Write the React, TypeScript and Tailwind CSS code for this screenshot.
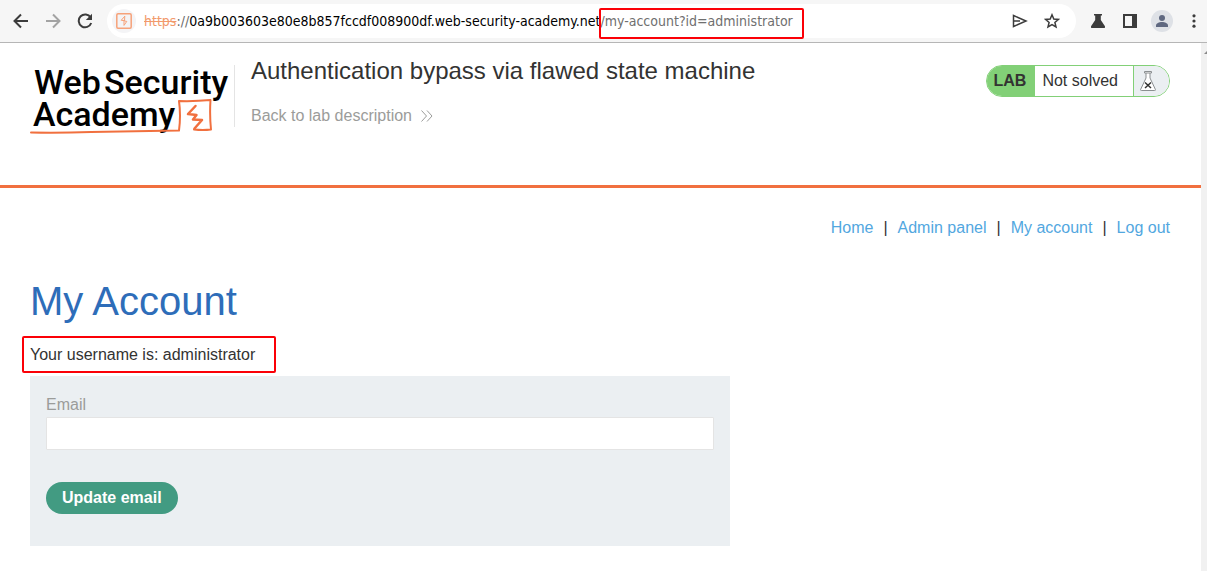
import type { ReactNode } from "react";

function IconButton({ label, className = "w-8", children }: { label: string; className?: string; children: ReactNode }) {
  return (
    <button type="button" aria-label={label} className={`flex h-8 shrink-0 items-center justify-center ${className}`}>
      {children}
    </button>
  );
}

function BrowserBar() {
  return (
    <div className="flex h-[43px] items-center border-b border-[#b6b6b6] bg-[#f6f6f6] pl-[5px] font-['DejaVu_Sans_Condensed','Noto_Sans',sans-serif] text-[#3c3c3c]">
      <IconButton label="Back">
        <svg width="16" height="16" viewBox="0 0 16 16" fill="none" stroke="currentColor" strokeWidth="2">
          <path d="M15 8H2.5M8 1.5 1.5 8 8 14.5" />
        </svg>
      </IconButton>
      <IconButton label="Forward" className="w-8 text-[#a3a3a3]">
        <svg width="16" height="16" viewBox="0 0 16 16" fill="none" stroke="currentColor" strokeWidth="2">
          <path d="M1 8h12.500M8 1.500 14.500 8 8 14.500" />
        </svg>
      </IconButton>
      <IconButton label="Reload">
        <svg width="16" height="16" viewBox="0 0 16 16">
          <path d="M13.600 4.500A6.400 6.400 0 1 0 14.200 10" fill="none" stroke="currentColor" strokeWidth="2" />
          <path d="M15 .8v6.200H8.800z" fill="currentColor" />
        </svg>
      </IconButton>
      <div className="ml-1.5 flex h-[34px] min-w-0 grow items-center rounded-full bg-white pl-[5px] pr-2">
        <span className="flex h-6 w-6 shrink-0 items-center justify-center rounded-full bg-[#f4f4f6]">
          <svg width="16" height="16" viewBox="0 0 16 16" fill="none" stroke="#f6a27a">
            <rect x=".8" y=".8" width="14.400" height="14.400" rx="1.200" strokeWidth="1.500" />
            <path d="M8.800 3.200 5.200 7.300 8 7.600v4.800l2.800-4L8.500 8z" strokeWidth="1" />
          </svg>
        </span>
        <div className="ml-2 flex grow items-center whitespace-nowrap text-[14px] leading-5 text-black">
          <span className="text-[#f29a6c] line-through">https</span>
          <span className="text-[#6b6b6b]">://</span>
          <span>0a9b003603e80e8b857fccdf008900df.web-security-academy.net</span>
          <span className="relative text-[#6f6f6f]">
            /my-account?id=administrator
            <span className="pointer-events-none absolute -bottom-2 -left-px -right-[11px] -top-[3px] rounded-[2px] border-2 border-[#fb0007]" />
          </span>
        </div>
        <IconButton label="Share">
          <svg width="16" height="14" viewBox="0 0 16 14" fill="none" stroke="currentColor" strokeWidth="1.500">
            <path d="M1.500 1.500 14 7 1.500 12.500zM2 7h6" />
          </svg>
        </IconButton>
        <IconButton label="Bookmark">
          <svg width="16" height="16" viewBox="0 0 16 16" fill="none" stroke="currentColor" strokeWidth="1.500">
            <path d="m8 1.800 1.800 4.200 4.600.4-3.500 3 1.100 4.500-4-2.400-4 2.400 1.100-4.500-3.500-3L6.200 6z" />
          </svg>
        </IconButton>
      </div>
      <IconButton label="Labs extension" className="ml-1.5 w-8">
        <svg width="14" height="14" viewBox="0 0 14 14" fill="currentColor">
          <path d="M3 0h8v1.500H9.800V6l4 6c.7 1.200.1 2-1 2H1.200c-1.100 0-1.700-.8-1-2l4-6V1.500H3z" />
        </svg>
      </IconButton>
      <IconButton label="Side panel">
        <svg width="14" height="14" viewBox="0 0 14 14" fill="currentColor" fillRule="evenodd">
          <path d="M0 0h14v14H0zM2 2v10h7V2z" />
        </svg>
      </IconButton>
      <IconButton label="Profile">
        <svg width="22" height="22" viewBox="0 0 22 22">
          <circle cx="11" cy="11" r="11" fill="#dee1e6" />
          <circle cx="11" cy="8" r="3" fill="#5f6880" />
          <path d="M5 17v-1.500c0-2 3-3.500 6-3.500s6 1.500 6 3.500V17z" fill="#5f6880" />
        </svg>
      </IconButton>
      <IconButton label="Menu" className="ml-[3px] w-[26px]">
        <svg width="4" height="14" viewBox="0 0 4 14" fill="currentColor">
          <circle cx="2" cy="1.800" r="1.600" />
          <circle cx="2" cy="7" r="1.600" />
          <circle cx="2" cy="12.200" r="1.600" />
        </svg>
      </IconButton>
    </div>
  );
}

function Logo() {
  return (
    <svg width="202" height="76" viewBox="0 0 202 76" role="img" aria-label="Web Security Academy">
      <text fill="#000" fontFamily="Roboto, sans-serif" fontWeight="500" fontSize="34">
        <tspan x="4" y="33">Web</tspan>
        <tspan x="74" y="33">Security</tspan>
        <tspan x="3" y="65">Academy</tspan>
      </text>
      <g fill="none" stroke="#f1703f" strokeLinecap="round" strokeLinejoin="round">
        <path d="M1 71.500q30 .5 60-.5l88-1.500q2-15 0-29.500 16 .5 31.500-1-1 15 .5 29.500-8 1-17 0" strokeWidth="2" />
        <path d="m165.500 45-7.500 8 8.500 1-3.500 4.500 9 .5-7.500 8.500" strokeWidth="2.500" />
      </g>
    </svg>
  );
}

function LabStatus() {
  return (
    <div className="flex h-8 items-stretch overflow-hidden rounded-full border border-[#82d077] bg-white text-base text-[#333332]">
      <span className="flex items-center bg-[#82d077] pl-[7px] pr-[9px] font-bold">LAB</span>
      <span className="flex items-center pl-[7px] pr-[15px]">Not solved</span>
      <span className="flex w-9 items-center border-l border-[#82d077] bg-[#ebeff2] pl-1.5">
        <svg width="16" height="20" viewBox="0 0 16 20" fill="none">
          <path d="M4.500.5h7v1.500h-7zM6 2v5L.6 18.500q-.3 1 .7 1h13.400q1 0 .7-1L10 7V2" fill="#fff" stroke="#8b8f91" />
          <path d="m5 11.500 6 5.500M11 11.500l-6 5.500" stroke="#333332" strokeWidth="1.500" />
        </svg>
      </span>
    </div>
  );
}

const links = ["Home", "Admin panel", "My account", "Log out"];

export default function App() {
  return (
    <div className="min-h-screen bg-white font-['Liberation_Sans',Arial,sans-serif] text-[#333332]">
      <BrowserBar />
      <div className="flex min-h-[calc(100vh-43px)]">
        <div className="min-w-0 grow">
          <header className="flex h-[145px] items-start border-b-3 border-[#f1703f] pl-[30px] pr-[31px] pt-[18px]">
            <Logo />
            <div className="ml-0.5 mt-1 h-[62px] w-px bg-[#e4e4e4]" />
            <div className="ml-4 grow -mt-1">
              <h2 className="text-2xl leading-7">Authentication bypass via flawed state machine</h2>
              <a href="#lab" className="mt-[19px] inline-flex items-center gap-[9px] text-base leading-6 text-[#9b9c9a]">
                Back to lab description
                <svg width="12" height="12" viewBox="0 0 12 12" fill="none" stroke="currentColor">
                  <path d="m.5.500 5 5.500-5 5.500M6 .5 11 6l-5 5.500" />
                </svg>
              </a>
            </div>
            <div className="mt-1">
              <LabStatus />
            </div>
          </header>
          <main className="pl-[30px] pr-[31px] pt-7">
            <nav className="flex justify-end gap-2.5 text-base leading-6">
              {links.map((label, i) => (
                <span key={label} className="flex gap-2.5">
                  {i > 0 && <span>|</span>}
                  <a href="#" className="text-[#52a7df]">{label}</a>
                </span>
              ))}
            </nav>
            <h1 className="mt-9 text-[40px] leading-[50px] text-[#2e6db9]">My Account</h1>
            <p className="relative mt-[17px] w-fit text-base leading-6">
              Your username is: administrator
              <span className="pointer-events-none absolute -bottom-1.5 -left-2 -right-[21px] -top-[7px] rounded-[2px] border-2 border-[#fb0007]" />
            </p>
            <form
              className="mt-[9px] max-w-[700px] bg-[#ebeff2] px-4 pb-8 pt-[17px]"
              onSubmit={(e) => e.preventDefault()}
            >
              <label htmlFor="email" className="block text-base leading-6 text-[#9b9c9a]">Email</label>
              <input
                id="email"
                type="email"
                className="block h-[33px] w-full rounded-[1px] border border-[#e4e4e4] bg-white px-2 outline-none"
              />
              <button type="submit" className="mt-8 block h-8 rounded-full bg-[#429b82] px-4 text-base font-bold text-white">
                Update email
              </button>
            </form>
          </main>
        </div>
        <div className="w-1.5 shrink-0 overflow-hidden bg-[#f1f1f1] pt-2">
          <svg className="ml-0.5" width="4" height="3" viewBox="0 0 4 3" fill="#8a8a8a">
            <path d="M4 0v3H1z" />
          </svg>
        </div>
      </div>
    </div>
  );
}
